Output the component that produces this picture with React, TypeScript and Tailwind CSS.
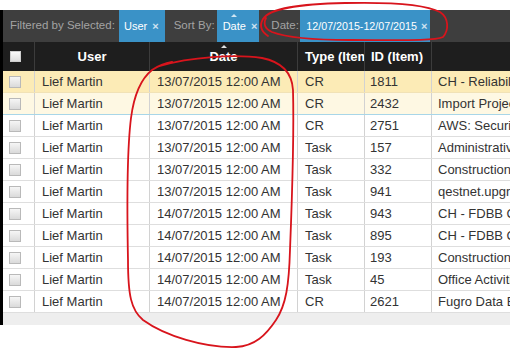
import React from "react";

const rows = [
  ["13/07/2015 12:00 AM", "CR", "1811", "CH - Reliability Program"],
  ["13/07/2015 12:00 AM", "CR", "2432", "Import Project"],
  ["13/07/2015 12:00 AM", "CR", "2751", "AWS: Security"],
  ["13/07/2015 12:00 AM", "Task", "157", "Administrative"],
  ["13/07/2015 12:00 AM", "Task", "332", "Construction Management"],
  ["13/07/2015 12:00 AM", "Task", "941", "qestnet.upgrade"],
  ["14/07/2015 12:00 AM", "Task", "943", "CH - FDBB Connect"],
  ["14/07/2015 12:00 AM", "Task", "895", "CH - FDBB Connect"],
  ["14/07/2015 12:00 AM", "Task", "193", "Construction Support"],
  ["14/07/2015 12:00 AM", "Task", "45", "Office Activities"],
  ["14/07/2015 12:00 AM", "CR", "2621", "Fugro Data Base"],
];

const font = { fontFamily: '"Liberation Sans", Arial, sans-serif' };

function Box({ header }: { header?: boolean }) {
  return (
    <div
      className={
        header
          ? "h-[11px] w-[11px] border border-[#cfcfcf] bg-gradient-to-b from-[#fafafa] to-[#dedede]"
          : "h-[12px] w-[12px] border border-[#b9b9b9] bg-gradient-to-b from-[#f6f6f6] to-[#dadada]"
      }
    />
  );
}

export default function App() {
  const cols = "grid grid-cols-[32px_115px_148px_67px_67px_120px]";
  return (
    <div className="relative h-[352px] w-[510px] overflow-hidden bg-white" style={font}>
      <div className="h-[10px]" />
      <div className="w-[640px] border-l-[3px] border-black">
        {/* toolbar */}
        <div className="flex h-[32px] items-center bg-[#3e3e3e] text-[11.5px] text-[#a3a3a3]">
          <span className="w-[116px] pl-[7px]">Filtered by Selected:</span>
          <div className="flex h-full items-center bg-[#3a92c7] pl-[5px] pr-[6px] text-[11px] text-white">
            <span>User</span>
            <span className="ml-[5px] text-[11px] font-bold text-[#cfe3f1]">×</span>
          </div>
          <span className="w-[52px] pl-[9px]">Sort By:</span>
          <div className="relative flex h-full items-center bg-[#3a92c7] pl-[6px] pr-[2px] text-[11px] text-white">
            <span className="absolute left-[14px] top-[4px] h-0 w-0 border-x-[3px] border-b-[3px] border-x-transparent border-b-[#cfe5f3]" />
            <span>Date</span>
            <span className="ml-[5px] text-[11px] font-bold text-[#cfe3f1]">×</span>
          </div>
          <span className="w-[41px] pl-[12px]">Date:</span>
          <div className="flex h-full items-center bg-[#3a92c7] pl-[6px] pr-[3px] text-[10.7px] text-white">
            <span className="whitespace-nowrap">12/07/2015-12/07/2015</span>
            <span className="ml-[4px] text-[11px] font-bold text-[#cfe3f1]">×</span>
          </div>
        </div>
        {/* header */}
        <div className={`${cols} h-[29px] bg-[#1e1e1e] text-[13px] font-bold text-white`}>
          <div className="flex items-center border-r border-[#3c3c3c] pl-[7px]">
            <Box header />
          </div>
          <div className="flex items-center justify-center border-r border-[#3c3c3c]">User</div>
          <div className="relative flex items-center justify-center border-r border-[#3c3c3c]">
            <span className="absolute left-[71px] top-[3px] h-0 w-0 border-x-[3px] border-b-[3px] border-x-transparent border-b-[#e0e0e0]" />
            Date
          </div>
          <div className="flex items-center overflow-hidden whitespace-nowrap border-r border-[#3c3c3c] pl-[7px]">
            Type (Item)
          </div>
          <div className="flex items-center border-r border-[#3c3c3c] pl-[6px]">ID (Item)</div>
          <div />
        </div>
        {/* rows */}
        {rows.map((r, i) => {
          const bg = i === 0 ? "bg-[#fcebb6]" : i === 1 ? "bg-[#fef8e3]" : "bg-white";
          const bb = i === 0 ? "border-[#f1e2b6]" : i === 1 ? "border-[#a8d6e8]" : "border-[#dedede]";
          return (
            <div
              key={i}
              className={`${cols} h-[22px] border-b ${bb} ${bg} text-[13px] text-[#333333]`}
            >
              <div className="flex items-center border-r border-[#d2d2d2] pl-[6px]">
                <Box />
              </div>
              <div className="flex items-center border-r border-[#d2d2d2] pl-[7px]">Lief Martin</div>
              <div className="flex items-center border-r border-[#d2d2d2] pl-[7px]">{r[0]}</div>
              <div className="flex items-center border-r border-[#d2d2d2] pl-[7px]">{r[1]}</div>
              <div className="flex items-center border-r border-[#d2d2d2] pl-[5px]">{r[2]}</div>
              <div className="flex items-center overflow-hidden whitespace-nowrap pl-[6px]">{r[3]}</div>
            </div>
          );
        })}
        <div className="h-[12px] bg-[#eeeeee]" />
      </div>
      {/* red annotations */}
      <svg
        className="pointer-events-none absolute left-0 top-0"
        width="510"
        height="352"
        viewBox="0 0 510 352"
        fill="none"
      >
        <path
          d="M 268 36 C 262 32, 259 26, 263 19 C 270 8, 300 4, 345 3 C 390 2, 425 4, 440 12 C 449 18, 449 30, 443 37 C 435 41, 400 40, 350 40 C 310 40, 285 37, 272 32 C 265 29, 263 24, 266 18"
          stroke="#d8141c"
          strokeWidth="1.8"
          strokeLinecap="round"
        />
        <path
          d="M 160 66 C 190 57, 235 54, 262 58 C 282 62, 292 72, 293 90 C 294 130, 292 200, 290 250 C 289 285, 286 305, 276 320 C 266 335, 255 346, 236 347 C 205 348, 165 336, 143 320 C 131 310, 128 295, 128 260 C 127 210, 127 150, 131 118 C 134 95, 142 78, 152 70 C 158 66, 166 63, 172 62"
          stroke="#d8141c"
          strokeWidth="1.8"
          strokeLinecap="round"
        />
      </svg>
    </div>
  );
}
